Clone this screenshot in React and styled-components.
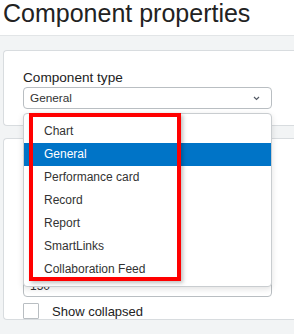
import React from 'react';
import styled, { createGlobalStyle } from 'styled-components';

const GlobalStyle = createGlobalStyle`
  html, body {
    margin: 0;
    padding: 0;
    background: #ffffff;
    overflow: hidden;
  }
  body {
    font-family: "Liberation Sans", Arial, sans-serif;
    color: #333333;
  }
`;

const options = [
  'Chart',
  'General',
  'Performance card',
  'Record',
  'Report',
  'SmartLinks',
  'Collaboration Feed',
];

const Page = styled.div`
  width: 294px;
  height: 334px;
  overflow: hidden;
`;

const Title = styled.h1`
  margin: 0;
  height: 35px;
  padding: 0 0 0 3px;
  font-size: 25px;
  font-weight: 400;
  line-height: 27px;
  color: #222222;
  box-sizing: border-box;
`;

const Body = styled.div`
  background: #f2f4f5;
  border-top: 1px solid #e2e5e7;
  padding: 14px 0 0 3px;
  height: 300px;
  display: flex;
  flex-direction: column;
  gap: 12px;
`;

const Card = styled.section`
  background: #ffffff;
  border: 1px solid #d8dcdf;
  border-right: none;
  border-radius: 4px 0 0 4px;
  padding: ${(p) => p.$pad || '18px 21px 16px 19px'};
  display: flex;
  flex-direction: column;
`;

const Label = styled.label`
  font-size: 13.6px;
  color: #222222;
  line-height: 17px;
  margin-bottom: ${(p) => p.$mb || '3px'};
  display: block;
`;

const Field = styled.div`
  position: relative;
  width: 249px;
`;

const Select = styled.div`
  height: 20px;
  border: 1px solid #b9bec2;
  border-radius: 4px;
  display: flex;
  align-items: center;
  justify-content: space-between;
  padding: 0 11px 0 6px;
  font-size: 11.8px;
  color: #333333;
`;

const Input = styled.div`
  height: 20px;
  border: 1px solid #b9bec2;
  border-radius: 4px;
  display: flex;
  align-items: center;
  padding: 0 6px;
  font-size: 12px;
  color: #333333;
  margin-bottom: ${(p) => p.$mb || '0'};
`;

const Menu = styled.ul`
  position: absolute;
  top: 26px;
  left: 0;
  width: 249px;
  margin: 0;
  padding: 6px 0 5px;
  list-style: none;
  background: #ffffff;
  border: 1px solid #c9cdd0;
  border-radius: 4px;
  box-shadow: 0 2px 6px rgba(0, 0, 0, 0.12);
  box-sizing: border-box;
  z-index: 5;
`;

const Item = styled.li`
  height: 23px;
  line-height: 23px;
  padding-left: 20px;
  font-size: 12px;
  color: ${(p) => (p.$active ? '#ffffff' : '#333333')};
  background: ${(p) => (p.$active ? '#0074c7' : 'transparent')};
`;

const Highlight = styled.div`
  position: absolute;
  top: -1px;
  left: 5px;
  width: 152px;
  height: 168px;
  border: 4px solid #ff0000;
  box-sizing: border-box;
  box-shadow: 2px 2px 4px rgba(0, 0, 0, 0.25);
  pointer-events: none;
`;

const CheckRow = styled.div`
  display: flex;
  align-items: center;
  gap: 13px;
  margin-top: 6px;
  font-size: 13px;
  color: #222222;
`;

const Box = styled.span`
  width: 14px;
  height: 14px;
  border: 1px solid #b9bec2;
  border-radius: 1px;
  background: #ffffff;
`;

const Chevron = () => (
  <svg width="7" height="5" viewBox="0 0 7 5">
    <path d="M1 1l2.5 2.5L6 1" fill="none" stroke="#555b66" strokeWidth="1.2" />
  </svg>
);

export default function App() {
  return (
    <Page>
      <GlobalStyle />
      <Title>Component properties</Title>
      <Body>
        <Card>
          <Label $mb="1px">Component type</Label>
          <Field>
            <Select>
              General
              <Chevron />
            </Select>
            <Menu>
              {options.map((o) => (
                <Item key={o} $active={o === 'General'}>
                  {o}
                </Item>
              ))}
              <Highlight />
            </Menu>
          </Field>
        </Card>
        <Card $pad="12px 21px 0 19px">
          <Label>Title</Label>
          <Field>
            <Input $mb="10px">General</Input>
          </Field>
          <Label>Description</Label>
          <Field>
            <Input $mb="10px" />
          </Field>
          <Label>Height</Label>
          <Field>
            <Input>150</Input>
          </Field>
          <CheckRow>
            <Box />
            Show collapsed
          </CheckRow>
        </Card>
      </Body>
    </Page>
  );
}
